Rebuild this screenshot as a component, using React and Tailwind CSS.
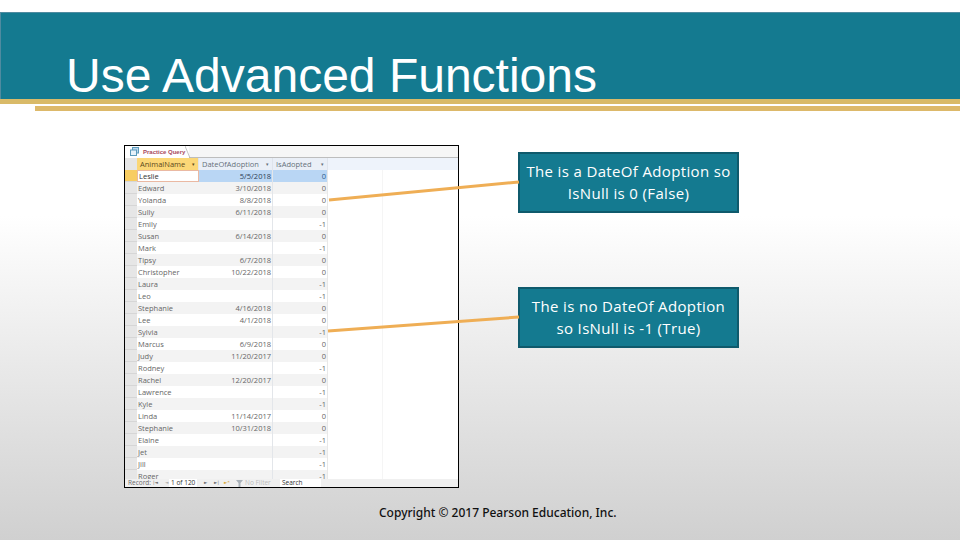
import React from "react";

const rows = [
  ["Leslie", "5/5/2018", "0"],
  ["Edward", "3/10/2018", "0"],
  ["Yolanda", "8/8/2018", "0"],
  ["Sully", "6/11/2018", "0"],
  ["Emily", "", "-1"],
  ["Susan", "6/14/2018", "0"],
  ["Mark", "", "-1"],
  ["Tipsy", "6/7/2018", "0"],
  ["Christopher", "10/22/2018", "0"],
  ["Laura", "", "-1"],
  ["Leo", "", "-1"],
  ["Stephanie", "4/16/2018", "0"],
  ["Lee", "4/1/2018", "0"],
  ["Sylvia", "", "-1"],
  ["Marcus", "6/9/2018", "0"],
  ["Judy", "11/20/2017", "0"],
  ["Rodney", "", "-1"],
  ["Rachel", "12/20/2017", "0"],
  ["Lawrence", "", "-1"],
  ["Kyle", "", "-1"],
  ["Linda", "11/14/2017", "0"],
  ["Stephanie", "10/31/2018", "0"],
  ["Elaine", "", "-1"],
  ["Jet", "", "-1"],
  ["Jill", "", "-1"],
  ["Roger", "", "-1"],
];

function HeaderCell({ label, className }) {
  return (
    <div className={`flex items-center justify-between h-full pl-[3px] pr-[3px] border-r border-[#dfe4ec] ${className}`}>
      <span>{label}</span>
      <span className="text-[5px] leading-none">▾</span>
    </div>
  );
}

function Row({ row, index }) {
  const selected = index === 0;
  const band = index % 2 === 1 ? "bg-[#f3f3f3]" : "bg-white";
  return (
    <div className="flex h-[12px] shrink-0 text-[7.5px] leading-[12px] text-[#666]">
      <div className={`w-[12px] shrink-0 border-b border-[#d6d6d6] ${selected ? "bg-[#f8cd62]" : "bg-[#e6e6e6]"}`} />
      <div className={`w-[62px] shrink-0 pl-[1px] overflow-hidden ${selected ? "bg-white border border-[#eab9a3] text-[#333] leading-[10px]" : band}`}>
        {row[0]}
      </div>
      <div className={`w-[74px] shrink-0 pr-[1px] text-right border-r border-[#e3e6ea] ${selected ? "bg-[#b9d6f4] text-[#2c3f55]" : band}`}>
        {row[1]}
      </div>
      <div className={`w-[55px] shrink-0 pr-[1px] text-right border-r border-[#e8e8e8] ${selected ? "bg-[#b9d6f4] text-[#2c5a8c]" : band}`}>
        {row[2]}
      </div>
      <div className="w-[55px] shrink-0 border-r border-[#f5f5f5] bg-white" />
      <div className="flex-1 bg-white" />
    </div>
  );
}

function Datasheet() {
  return (
    <div className="flex flex-col w-[335px] h-[343px] shrink-0 border border-black bg-white font-['Open_Sans',sans-serif] overflow-hidden">
      <div className="relative flex h-[12px] shrink-0 items-center bg-[#f6f6f6] border-b border-[#bdbdbd]">
        <div className="flex h-[13px] w-[64px] items-center gap-[3px] pl-[5px] bg-white">
          <svg width="9" height="9" viewBox="0 0 9 9" className="shrink-0">
            <rect x="2.5" y="0.5" width="6" height="5.5" fill="#bcd6ec" stroke="#5b9abb" />
            <rect x="0.5" y="3" width="6" height="5.5" fill="#e6f1f9" stroke="#5b9abb" />
          </svg>
          <span className="ml-[1px] font-['Liberation_Sans',sans-serif] text-[6px] font-bold leading-none text-[#a84a60] whitespace-nowrap">Practice Query</span>
        </div>
        <svg width="6" height="13" viewBox="0 0 6 13" className="absolute left-[60px] top-0">
          <path d="M0 0 L5 12" stroke="#b5b5b5" strokeWidth="0.8" fill="none" />
        </svg>
      </div>
      <div className="flex h-[12px] shrink-0 text-[7.5px] leading-[12px] text-[#66707a] bg-[#eef3fb]">
        <div className="w-[12px] shrink-0 bg-[#e6e6e6]" />
        <div className="w-[62px] shrink-0">
          <HeaderCell label="AnimalName" className="bg-[#fbd777] text-[#5b4a1c]" />
        </div>
        <div className="w-[74px] shrink-0">
          <HeaderCell label="DateOfAdoption" className="bg-[#eaeff7]" />
        </div>
        <div className="w-[55px] shrink-0">
          <HeaderCell label="IsAdopted" className="bg-[#eaeff7]" />
        </div>
      </div>
      <div className="flex flex-col flex-1 overflow-hidden">
        {rows.map((row, i) => (
          <Row key={i} row={row} index={i} />
        ))}
      </div>
      <div className="flex items-center h-[8px] shrink-0 bg-[#f0f0f0] text-[6.5px] leading-[8px] text-[#6b6b6b] whitespace-nowrap">
        <span className="ml-[3px] w-[25px]">Record:</span>
        <span className="w-[12px] font-['DejaVu_Sans',sans-serif] text-[4.5px]">|◄</span>
        <span className="w-[4px] font-['DejaVu_Sans',sans-serif] text-[4.5px] text-[#b0b0b0]">◄</span>
        <span className="flex items-center w-[28px] h-full bg-white pl-[2px] text-[#333]">1 of 120</span>
        <span className="ml-[7px] w-[10px] font-['DejaVu_Sans',sans-serif] text-[4.5px]">►</span>
        <span className="w-[10px] font-['DejaVu_Sans',sans-serif] text-[4.5px]">►|</span>
        <span className="w-[12px] font-['DejaVu_Sans',sans-serif] text-[4.5px] text-[#d8a93a]">►*</span>
        <svg width="8" height="7" viewBox="0 0 8 7" className="shrink-0">
          <path d="M0 0 H7 L4.5 3 V7 H2.5 V3 Z" fill="#aab2ba" />
        </svg>
        <span className="ml-[1px] w-[35px] text-[#bcbcbc]">No Filter</span>
        <span className="flex items-center w-[41px] h-full bg-white pl-[2px] text-[#333]">Search</span>
      </div>
    </div>
  );
}

function Callout({ lines }) {
  return (
    <div className="flex flex-col items-center justify-center w-[221px] h-[61px] border-2 border-[#0f5a6c] bg-[#147a90] text-[15px] tracking-[0.35px] leading-[21.5px] text-white font-['Open_Sans',sans-serif] whitespace-nowrap">
      <span>{lines[0]}</span>
      <span>{lines[1]}</span>
    </div>
  );
}

export default function App() {
  return (
    <div className="relative flex flex-col w-[960px] h-[540px] overflow-hidden bg-[linear-gradient(180deg,#ffffff_0%,#ffffff_40%,#f3f3f3_55%,#d0d0d0_100%)]">
      <div className="flex items-end h-[87px] mt-[12px] shrink-0 border-t border-l border-[#4f8ba0] bg-[#147a90] pl-[65px]">
        <h1 className="font-['Liberation_Sans',sans-serif] text-[48px] leading-[52px] mb-[-3px] text-white whitespace-nowrap">Use Advanced Functions</h1>
      </div>
      <div className="h-[5px] shrink-0 bg-[#d9ba68]" />
      <div className="h-[5px] mt-[2px] ml-[35px] shrink-0 bg-[#ddb96a]" />

      <div className="flex pl-[124px] pt-[34px]">
        <Datasheet />
        <div className="flex flex-col gap-[74px] ml-[59px] pt-[7px]">
          <Callout lines={["The is a DateOf Adoption so", "IsNull is 0 (False)"]} />
          <Callout lines={["The is no DateOf Adoption", "so IsNull is -1 (True)"]} />
        </div>
      </div>

      <div className="pl-[379px] mt-[17px] font-['Noto_Sans',sans-serif] font-medium text-[12px] leading-[16px] text-[#111]">
        Copyright © 2017 Pearson Education, Inc.
      </div>

      {/* connector lines */}
      <svg className="absolute inset-0 pointer-events-none" width="960" height="540" viewBox="0 0 960 540">
        <line x1="329" y1="200" x2="519" y2="182" stroke="#efae55" strokeWidth="3" />
        <line x1="328" y1="331" x2="519" y2="317" stroke="#efae55" strokeWidth="3" />
      </svg>
    </div>
  );
}
